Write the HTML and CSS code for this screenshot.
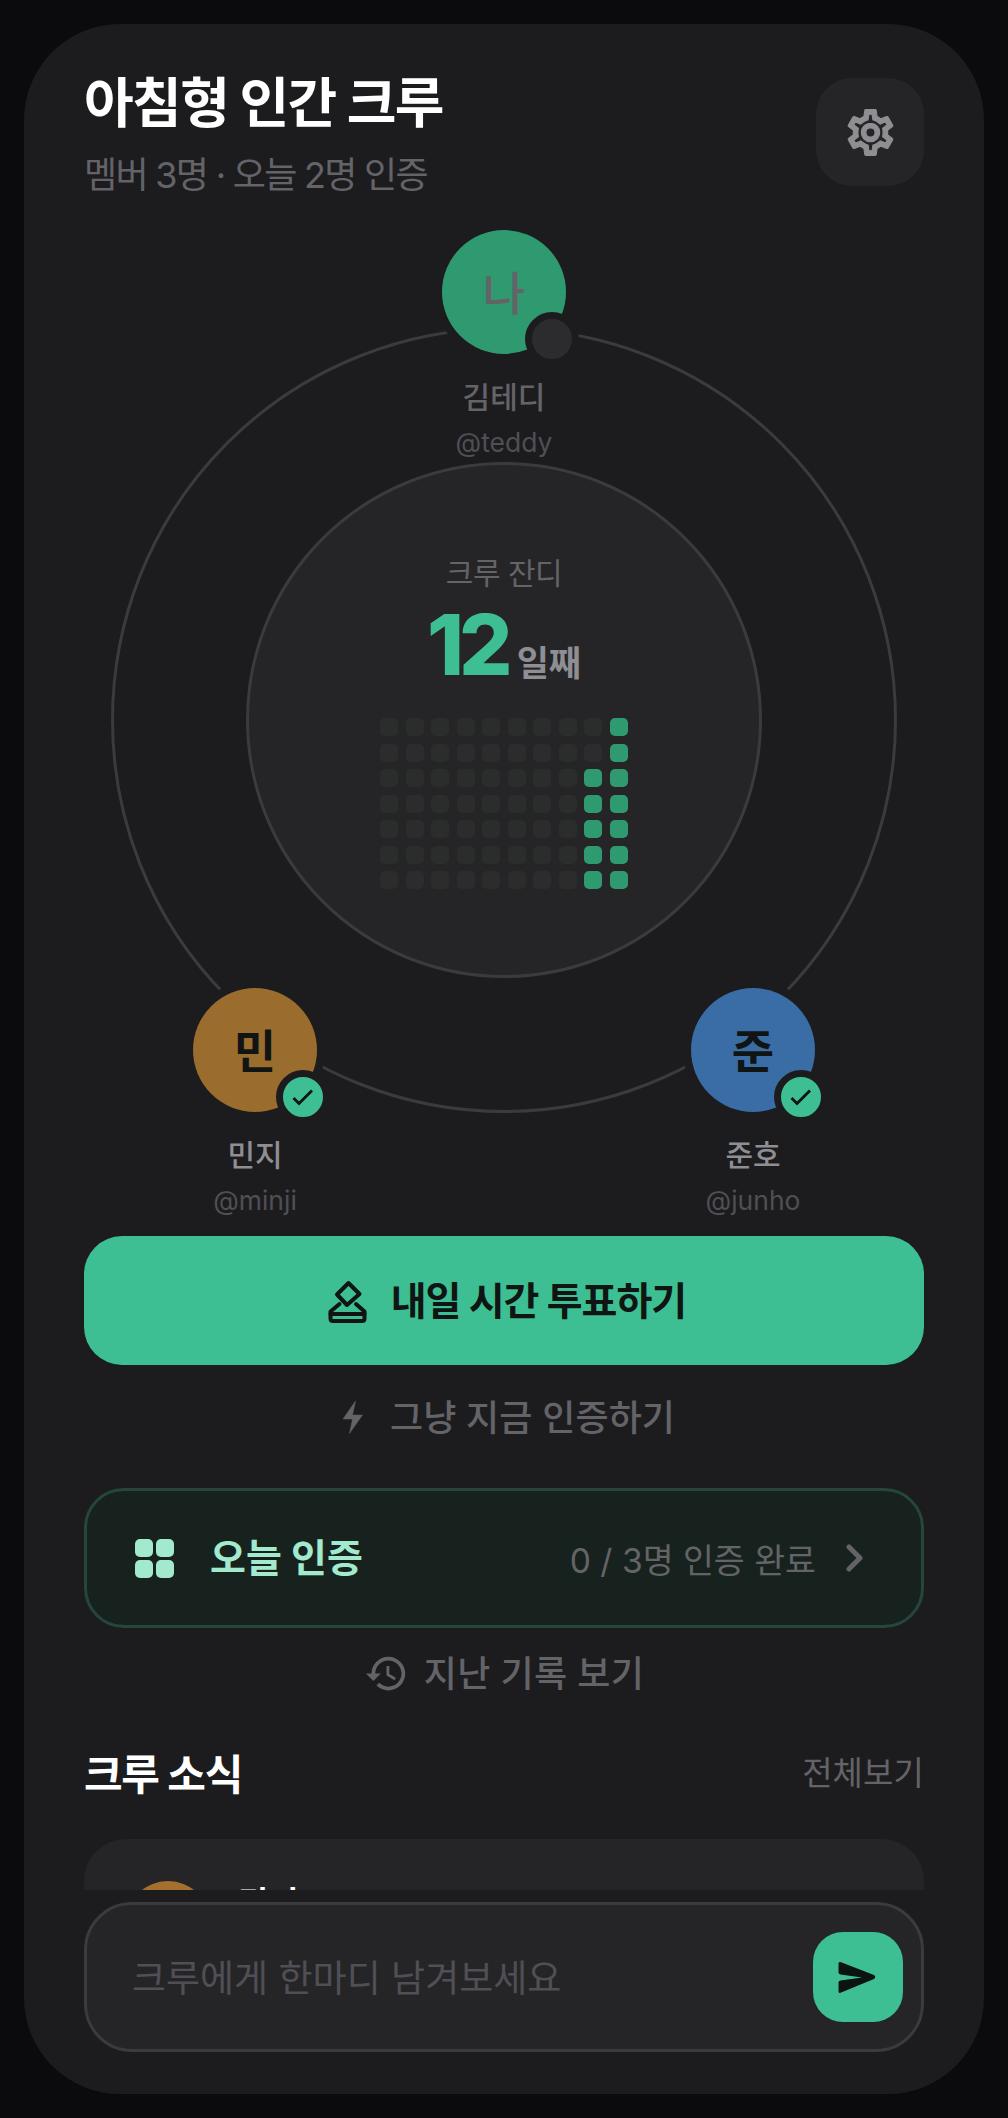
FILE: index.html
```html
<!DOCTYPE html>
<html lang="ko">
<head>
<meta charset="utf-8">
<title>아침형 인간 크루</title>
<link rel="stylesheet" href="styles.css">
</head>
<body>
<main class="phone">
  <div class="scroll">
    <header class="header">
      <div class="header-text">
        <h1 class="title">아침형 인간 크루</h1>
        <p class="subtitle">멤버 3명 · 오늘 2명 인증</p>
      </div>
      <button class="gear-btn" aria-label="설정">
        <svg class="gear-icon" viewBox="0 0 24 24"><path d="M19.43 12.98c.04-.32.07-.64.07-.98 0-.34-.03-.66-.07-.98l2.11-1.65c.19-.15.24-.42.12-.64l-2-3.46c-.09-.16-.26-.25-.44-.25-.06 0-.12.01-.17.03l-2.49 1c-.52-.4-1.08-.73-1.69-.98l-.38-2.65C14.46 2.18 14.25 2 14 2h-4c-.25 0-.46.18-.49.42l-.38 2.65c-.61.25-1.17.59-1.69.98l-2.49-1c-.06-.02-.12-.03-.18-.03-.17 0-.34.09-.43.25l-2 3.46c-.13.22-.07.49.12.64l2.11 1.65c-.04.32-.07.65-.07.98 0 .33.03.66.07.98l-2.11 1.65c-.19.15-.24.42-.12.64l2 3.46c.09.16.26.25.44.25.06 0 .12-.01.17-.03l2.49-1c.52.4 1.08.73 1.69.98l.38 2.65c.03.24.24.42.49.42h4c.25 0 .46-.18.49-.42l.38-2.65c.61-.25 1.17-.59 1.69-.98l2.49 1c.06.02.12.03.18.03.17 0 .34-.09.43-.25l2-3.46c.12-.22.07-.49-.12-.64l-2.11-1.65zm-1.98-1.71c.04.31.05.52.05.73 0 .21-.02.43-.05.73l-.14 1.13.89.7 1.08.84-.7 1.21-1.27-.51-1.04-.42-.9.68c-.43.32-.84.56-1.25.73l-1.06.43-.16 1.13-.2 1.35h-1.4l-.19-1.35-.16-1.13-1.06-.43c-.43-.18-.83-.41-1.23-.71l-.91-.7-1.06.43-1.27.51-.7-1.21 1.08-.84.89-.7-.14-1.13c-.03-.31-.05-.54-.05-.74s.02-.43.05-.73l.14-1.13-.89-.7-1.08-.84.7-1.21 1.27.51 1.04.42.9-.68c.43-.32.84-.56 1.25-.73l1.06-.43.16-1.13.2-1.35h1.39l.19 1.35.16 1.13 1.06.43c.43.18.83.41 1.23.71l.91.7 1.06-.43 1.27-.51.7 1.21-1.07.85-.89.7.14 1.13zM12 8c-2.21 0-4 1.79-4 4s1.79 4 4 4 4-1.79 4-4-1.79-4-4-4zm0 6c-1.1 0-2-.9-2-2s.9-2 2-2 2 .9 2 2-.9 2-2 2z"/></svg>
      </button>
    </header>

    <section class="orbit">
      <div class="ring"></div>
      <div class="core">
        <div class="core-label">크루 잔디</div>
        <div class="streak"><span class="streak-num">12</span><span class="streak-unit">일째</span></div>
        <div class="grass">
          <i class="cell"></i><i class="cell"></i><i class="cell"></i><i class="cell"></i><i class="cell"></i><i class="cell"></i><i class="cell"></i><i class="cell"></i><i class="cell"></i><i class="cell on"></i>
          <i class="cell"></i><i class="cell"></i><i class="cell"></i><i class="cell"></i><i class="cell"></i><i class="cell"></i><i class="cell"></i><i class="cell"></i><i class="cell"></i><i class="cell on"></i>
          <i class="cell"></i><i class="cell"></i><i class="cell"></i><i class="cell"></i><i class="cell"></i><i class="cell"></i><i class="cell"></i><i class="cell"></i><i class="cell on"></i><i class="cell on"></i>
          <i class="cell"></i><i class="cell"></i><i class="cell"></i><i class="cell"></i><i class="cell"></i><i class="cell"></i><i class="cell"></i><i class="cell"></i><i class="cell on"></i><i class="cell on"></i>
          <i class="cell"></i><i class="cell"></i><i class="cell"></i><i class="cell"></i><i class="cell"></i><i class="cell"></i><i class="cell"></i><i class="cell"></i><i class="cell on"></i><i class="cell on"></i>
          <i class="cell"></i><i class="cell"></i><i class="cell"></i><i class="cell"></i><i class="cell"></i><i class="cell"></i><i class="cell"></i><i class="cell"></i><i class="cell on"></i><i class="cell on"></i>
          <i class="cell"></i><i class="cell"></i><i class="cell"></i><i class="cell"></i><i class="cell"></i><i class="cell"></i><i class="cell"></i><i class="cell"></i><i class="cell on"></i><i class="cell on"></i>
        </div>
      </div>

      <div class="node node-me">
        <div class="avatar avatar-me">나<span class="badge badge-off"></span></div>
        <div class="node-name dim">김테디</div>
        <div class="node-handle">@teddy</div>
      </div>
      <div class="node node-minji">
        <div class="avatar avatar-minji">민<span class="badge"><svg class="check" viewBox="0 0 40 40"><path d="M10.5 21 16 26.5 29 13.5"/></svg></span></div>
        <div class="node-name">민지</div>
        <div class="node-handle">@minji</div>
      </div>
      <div class="node node-junho">
        <div class="avatar avatar-junho">준<span class="badge"><svg class="check" viewBox="0 0 40 40"><path d="M10.5 21 16 26.5 29 13.5"/></svg></span></div>
        <div class="node-name">준호</div>
        <div class="node-handle">@junho</div>
      </div>
    </section>

    <button class="primary">
      <svg class="vote-icon" viewBox="0 0 42 44"><path d="M22.5 4 33.500 15 21 26 11 15.500Z"/><path d="M13.500 25 4.500 32.500V39.500Q4.500 42 7 42H36Q38.500 42 38.500 39.500V32.500L30 25"/><path d="M4.500 35H38.500"/></svg>
      <span class="primary-label">내일 시간 투표하기</span>
    </button>

    <button class="secondary">
      <svg class="bolt-icon" viewBox="0 0 20 33"><path d="M12.500 0 0 18H9.500L6.500 32.500 19.500 14H9.500Z"/></svg>
      <span class="lift">그냥 지금 인증하기</span>
    </button>

    <div class="today">
      <div class="today-icon"><i></i><i></i><i></i><i></i></div>
      <div class="today-title">오늘 인증</div>
      <div class="today-count">0 / 3명 인증 완료</div>
      <svg class="chevron" viewBox="0 0 18 28"><path d="M3 3 14 14 3 25"/></svg>
    </div>

    <button class="history">
      <svg class="history-icon" viewBox="0 0 24 24"><path d="M13 3c-4.970 0-9 4.030-9 9H1l3.890 3.890.07.140L9 12H6c0-3.870 3.130-7 7-7s7 3.130 7 7-3.130 7-7 7c-1.930 0-3.680-.79-4.940-2.060l-1.420 1.420C8.270 19.990 10.510 21 13 21c4.970 0 9-4.030 9-9s-4.030-9-9-9zm-1 5v5l4.280 2.540.72-1.210-3.500-2.080V8H12z"/></svg>
      <span class="lift">지난 기록 보기</span>
    </button>

    <div class="section-head">
      <h2 class="section-title">크루 소식</h2>
      <span class="section-link">전체보기</span>
    </div>

    <article class="feed-card">
      <div class="feed-avatar"></div>
      <div class="feed-name">민지</div>
    </article>
  </div>

  <div class="composer">
    <div class="input">
      <span class="placeholder">크루에게 한마디 남겨보세요</span>
      <button class="send" aria-label="보내기">
        <svg class="send-icon" viewBox="0 0 38 33"><path d="M2.500 1 36 14Q38.500 16 36 18L2.500 31.800Q.500 32.300.5 30V21.500Q.5 19.800 2.500 19.500L24 16.500 2.500 13.500Q.5 13.200.5 11.500V2.500Q.5.500 2.500 1Z"/></svg>
      </button>
    </div>
  </div>
</main>
</body>
</html>
```
FILE: styles.css
```css
* { box-sizing: border-box; margin: 0; padding: 0; }
html, body { height: 100%; }
body {
  background: #0b0b0d;
  padding: 24px;
  font-family: Inter, "Noto Sans CJK KR", sans-serif;
  color: #fff;
}
button { font: inherit; border: 0; background: none; color: inherit; }

.phone {
  width: 960px;
  height: 2070px;
  background: #1c1c1e;
  border-radius: 96px;
  overflow: hidden;
  display: flex;
  flex-direction: column;
}
.scroll {
  flex: 1;
  min-height: 0;
  overflow: hidden;
  padding: 54px 60px 0;
}

.header { display: flex; justify-content: space-between; align-items: flex-start; height: 108px; }
.title { font-size: 54px; line-height: 60px; font-weight: 700; letter-spacing: -1.6px; margin-top: -4px; }
.subtitle { font-size: 36px; line-height: 44px; color: #636368; margin-top: 19px; letter-spacing: -1.700px; }
.gear-btn {
  width: 108px; height: 108px; border-radius: 36px; background: #252527;
  display: flex; align-items: center; justify-content: center;
}
.gear-icon { width: 55px; height: 55px; fill: #8e8e93; stroke: #8e8e93; stroke-width: .5; }

.orbit { position: relative; height: 1050px; }
.ring {
  position: absolute; left: 27px; top: 141px;
  width: 786px; height: 786px; border-radius: 50%;
  border: 3px solid #3a3a3f;
}
.core {
  position: absolute; left: 162px; top: 276px;
  width: 516px; height: 516px; border-radius: 50%;
  background: #252527; border: 3px solid #3a3a3f;
  display: flex; flex-direction: column; align-items: center;
}
.core-label { font-size: 30px; line-height: 40px; color: #636368; margin-top: 88px; letter-spacing: -.5px; }
.streak { display: flex; align-items: baseline; gap: 9px; height: 84px; margin-top: 10px; }
.streak-num { font-size: 84px; line-height: 84px; font-weight: 800; color: #3ebf93; letter-spacing: -5px; }
.streak-unit { font-size: 35px; font-weight: 700; color: #8e8e93; position: relative; top: 1px; }
.grass {
  display: grid;
  grid-template-columns: repeat(10, 18px);
  grid-auto-rows: 18px;
  gap: 7.5px;
  margin-top: 31px;
}
.cell { display: block; border-radius: 5px; background: #2b2d2c; }
.cell.on { background: #2f9970; }

.node {
  position: absolute; width: 200px;
  display: flex; flex-direction: column; align-items: center;
}
.node-me { left: 320px; top: 44px; }
.node-minji { left: 71px; top: 802px; }
.node-junho { left: 569px; top: 802px; }
.avatar {
  position: relative;
  width: 124px; height: 124px; border-radius: 50%;
  box-shadow: 0 0 0 8px #1c1c1e;
  display: flex; align-items: center; justify-content: center;
  padding-bottom: 5px;
  font-size: 46px; font-weight: 700; color: #101513;
}
.avatar-me { background: #2f9970; color: #636368; font-weight: 500; }
.avatar-minji { background: #9a6c2e; }
.avatar-junho { background: #3a6ca5; }
.badge {
  position: absolute; right: -13px; bottom: -12px;
  width: 54px; height: 54px; border-radius: 50%;
  background: #3ebf93; border: 7px solid #1c1c1e;
}
.badge-off { background: #2c2c2f; }
.check { display: block; width: 40px; height: 40px; fill: none; stroke: #0f1512; stroke-width: 2.800; }
.node-name { font-size: 30px; line-height: 40px; font-weight: 500; color: #8e8e93; margin-top: 22.500px; }
.node-name.dim { color: #636368; }
.node-handle { font-size: 26.500px; line-height: 36px; color: #4f4f55; margin-top: 7.500px; }

.primary {
  width: 100%; height: 129px; border-radius: 38px; background: #3ebf93; color: #0f1512;
  display: flex; align-items: center; justify-content: center; gap: 23px;
  padding-left: 4px;
  font-size: 39px; font-weight: 700; letter-spacing: -1px;
}
.primary-label { margin-top: -5px; }
.lift { margin-top: -5px; }
.vote-icon { width: 42px; height: 44px; fill: none; stroke: #0f1512; stroke-width: 4; stroke-linejoin: round; stroke-linecap: round; }

.secondary {
  width: 100%; height: 75px; margin-top: 15px; color: #636368;
  display: flex; align-items: center; justify-content: center; gap: 27px;
  padding-left: 10px;
  font-size: 36px; font-weight: 500; letter-spacing: .1px;
}
.bolt-icon { width: 20px; height: 33px; fill: #636368; stroke: #636368; stroke-width: .5; stroke-linejoin: round; }

.today {
  height: 140px; margin-top: 33px; padding: 0 57px 0 48px;
  border: 3px solid #25463a; border-radius: 40px; background: #17221e;
  display: flex; align-items: center;
}
.today-icon { display: grid; grid-template-columns: 18px 18px; grid-auto-rows: 18px; gap: 3px; }
.today-icon i { display: block; border-radius: 5px; background: #a3e9cd; }
.today-title { font-size: 39px; font-weight: 700; color: #a3e9cd; margin: -6px 0 0 36px; }
.today-count { font-size: 33.600px; color: #636368; margin-left: auto; }
.chevron { width: 18px; height: 28px; margin-left: 30px; fill: none; stroke: #636368; stroke-width: 5; stroke-linecap: round; stroke-linejoin: round; }

.history {
  width: 100%; height: 60px; margin-top: 15px; color: #636368;
  display: flex; align-items: center; justify-content: center; gap: 15px;
  font-size: 36px; font-weight: 500; letter-spacing: .3px;
}
.history-icon { width: 45px; height: 45px; fill: #636368; }

.section-head { height: 60px; margin-top: 39px; display: flex; justify-content: space-between; align-items: center; padding-bottom: 2px; }
.section-title { font-size: 42px; font-weight: 700; letter-spacing: -1.300px; }
.section-link { font-size: 33px; color: #636368; letter-spacing: .1px; }

.feed-card {
  margin-top: 37px; height: 220px; padding: 42px;
  background: #252527; border-radius: 42px;
  display: flex; gap: 28px;
}
.feed-avatar { width: 84px; height: 84px; border-radius: 50%; background: #a5702f; flex: none; }
.feed-name { font-size: 33px; line-height: 40px; font-weight: 700; margin-top: 2px; }

.composer { padding: 12px 60px 42px; }
.input {
  height: 150px; border: 3px solid #3a3a3f; border-radius: 48px; background: #252527;
  display: flex; align-items: center; justify-content: space-between;
  padding: 0 18px 0 45px;
}
.placeholder { font-size: 37px; color: #4f4f55; margin-top: -2px; }
.send {
  width: 90px; height: 90px; border-radius: 30px; background: #3ebf93;
  display: flex; align-items: center; justify-content: center;
  padding-right: 2px;
}
.send-icon { width: 38px; height: 33px; fill: #0c1411; }
```
